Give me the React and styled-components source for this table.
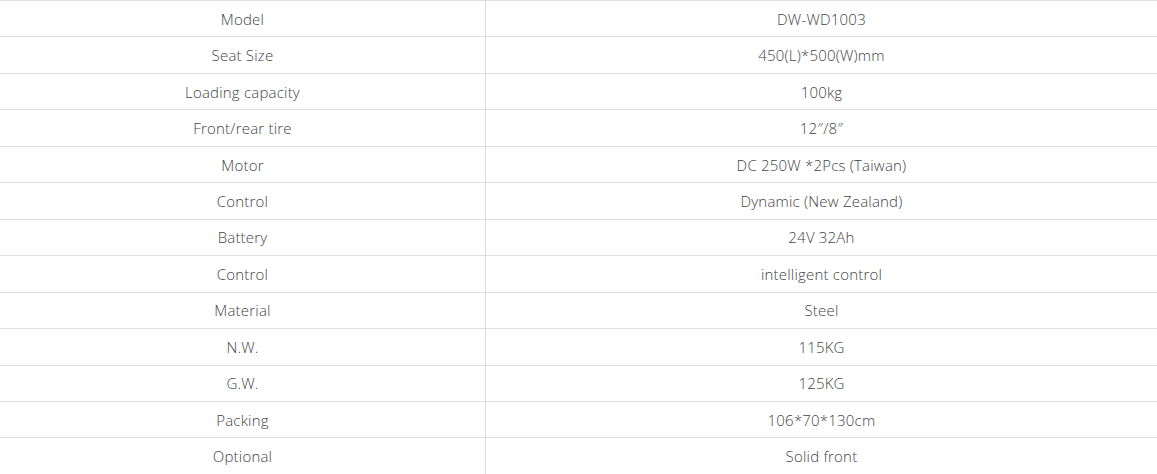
import React from "react";
import styled, { createGlobalStyle } from "styled-components";

const GlobalStyle = createGlobalStyle`
  body {
    margin: 0;
    background: #fff;
    font-family: "Open Sans", "Liberation Sans", sans-serif;
  }
`;

const SPECS = [
  ["Model", "DW-WD1003"],
  ["Seat Size", "450(L)*500(W)mm"],
  ["Loading capacity", "100kg"],
  ["Front/rear tire", "12\u2033/8\u2033"],
  ["Motor", "DC 250W *2Pcs (Taiwan)"],
  ["Control", "Dynamic (New Zealand)"],
  ["Battery", "24V 32Ah"],
  ["Control", "intelligent control"],
  ["Material", "Steel"],
  ["N.W.", "115KG"],
  ["G.W.", "125KG"],
  ["Packing", "106*70*130cm"],
  ["Optional", "Solid front"],
];

const Table = styled.div`
  width: 1157px;
  display: flex;
  flex-direction: column;
`;

const Row = styled.div`
  display: grid;
  grid-template-columns: 485px 1fr;
  height: 36.46px;
  box-sizing: border-box;
  border-top: 1px solid #dedede;
`;

const Cell = styled.div`
  display: flex;
  align-items: center;
  justify-content: center;
  font-size: 15px;
  font-weight: 300;
  letter-spacing: 0.2px;
  color: #444;
  border-left: ${(p) => (p.$divider ? "1px solid #dedede" : "none")};
`;

export default function App() {
  return (
    <>
      <GlobalStyle />
      <Table>
        {SPECS.map(([label, value], i) => (
          <Row key={i}>
            <Cell>{label}</Cell>
            <Cell $divider>{value}</Cell>
          </Row>
        ))}
      </Table>
    </>
  );
}
